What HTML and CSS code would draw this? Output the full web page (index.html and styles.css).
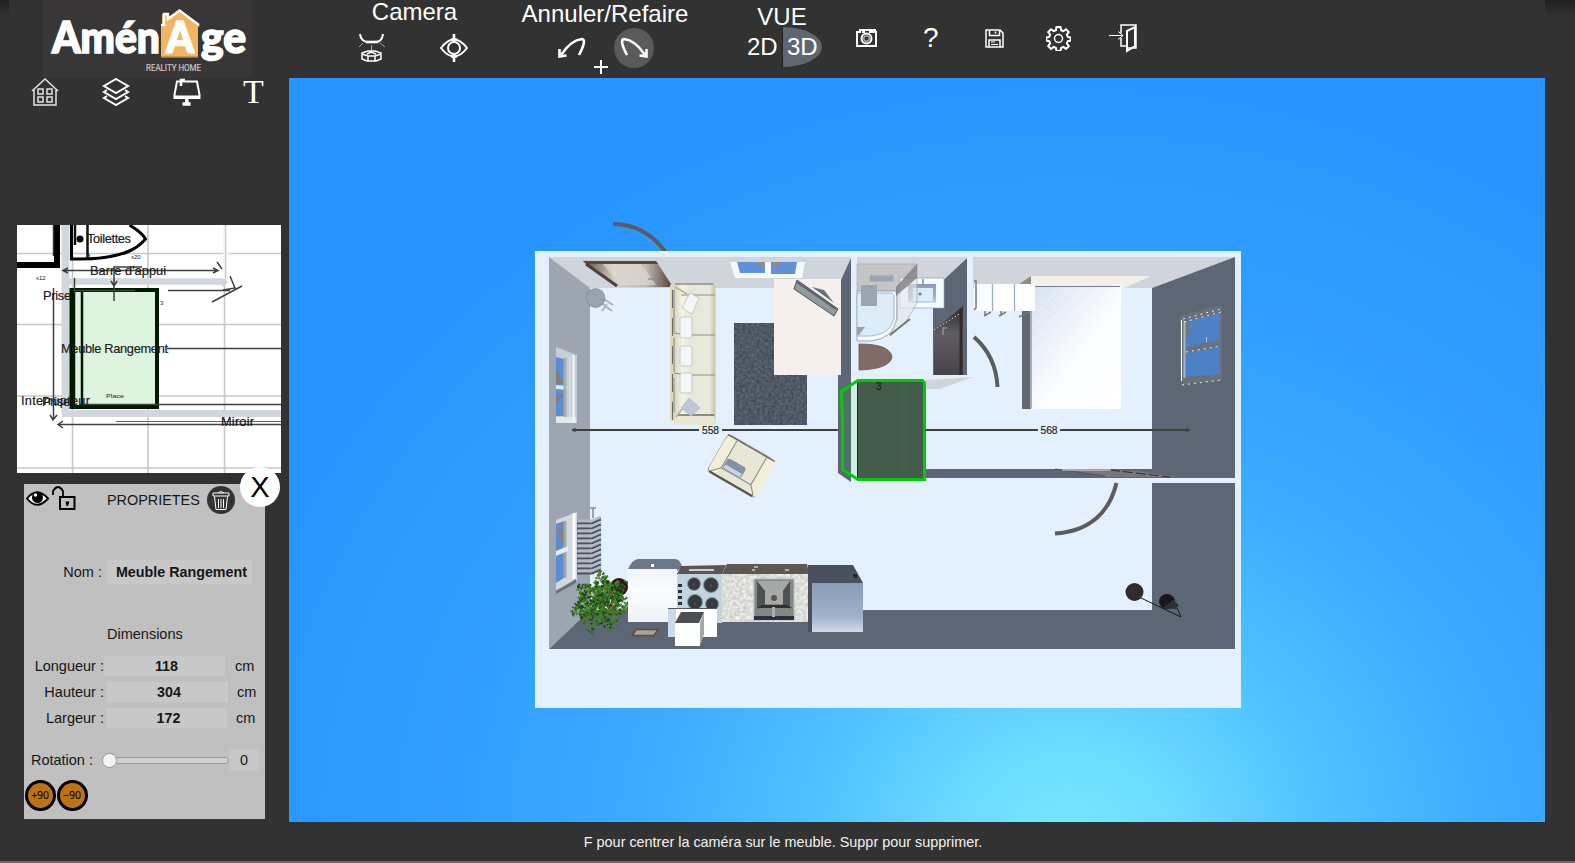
FILE: index.html
```html
<!DOCTYPE html>
<html lang="fr">
<head>
<meta charset="utf-8">
<title>AménAge</title>
<link rel="stylesheet" href="styles.css">
</head>
<body>
<div class="app">
  <header class="topbar">
    <div class="brand">
      <svg class="logo" viewBox="43 0 209 78" aria-label="AménAge Reality Home">
        <path d="M162 26V14h5v6l13-9 20 15-2 1v30h-37V27z" fill="#f2b562"/>
        <path d="M161 25h3V14h4v5l11.500-8.500L199 25" fill="none" stroke="#fff" stroke-width="2.400"/>
        <path d="M161 57h37" stroke="#b98a4a" stroke-width="1.500"/>
        <g class="logo-word">
          <text x="52" y="52.500" textLength="108" lengthAdjust="spacingAndGlyphs">Amén</text>
          <text x="166" y="52.500" textLength="28" lengthAdjust="spacingAndGlyphs">A</text>
          <text x="201" y="52.500" textLength="45" lengthAdjust="spacingAndGlyphs">ge</text>
        </g>
        <text class="logo-sub" x="146" y="70.500" textLength="55" lengthAdjust="spacingAndGlyphs">REALITY HOME</text>
      </svg>
    </div>
    <section class="group camera">
      <h2>Camera</h2>
      <div class="icons">
        <svg width="28" height="28" viewBox="0 0 28 28"><path d="M2 0q1 7 7 8h10q5-1 6-8" class="w2"/><path d="M8 8h12" class="w25"/><path d="M5 9l-4 4M22 9l5 4M13.500 11v5" class="w1 soft"/><path d="M4 19l6-2h7l6 2v6l-5 2h-9l-5-2zM4 20l6 2h7l6-2M10 22v5M17 22v5M9 20l4-2 5 2" class="w15"/></svg>
        <svg width="28" height="28" viewBox="0 0 28 28"><path d="M1 14q13-17 26 0-13 17-26 0z" class="w2"/><circle cx="14" cy="14" r="6" class="w2"/><path d="M14 0v8M14 20v8M11 5.500h6M11 22.500h6" class="w25"/></svg>
      </div>
    </section>
    <section class="group history">
      <h2>Annuler/Refaire</h2>
      <div class="icons">
        <svg width="28" height="22" viewBox="0 0 28 22"><path d="M3 18Q13 3 24 2q5 1-3 16M1.500 12v7.500l7-1" class="w25"/></svg>
        <span class="round"><svg width="28" height="22" viewBox="0 0 28 22"><path d="M25 18Q15 3 4 2q-5 1 3 16M26.500 12v7.500l-7-1" class="w25"/></svg></span>
        <svg class="plus" width="14" height="14" viewBox="0 0 14 14"><path d="M7 0v14M0 7h14" class="w2"/></svg>
      </div>
    </section>
    <section class="group view">
      <h2>VUE</h2>
      <div class="toggle"><span>2D</span><span class="active">3D</span></div>
    </section>
    <nav class="actions">
      <svg width="21" height="19" viewBox="0 0 21 19"><path d="M1 3h3V1h3v2h1V1h6v2h6v14H1zM16 3V1h3v2" class="w2"/><circle cx="10.500" cy="9.500" r="5" class="w2"/><circle cx="10.500" cy="9.500" r="3.500" fill="#aaa"/><circle cx="10.500" cy="9.500" r="2" fill="#323232"/></svg>
      <span class="help">?</span>
      <svg width="19" height="19" viewBox="0 0 19 19"><path d="M1 1h14l3 3v14H1zM4.500 1v5.500h10V1M4 18v-7h11v7M10.500 2.500v2" class="w15"/><path d="M6 13h4M6 15.500h7" class="w1"/></svg>
      <svg width="25" height="25" viewBox="0 0 25 25"><path d="M10.500 1h4l.6 3.200 2.200 1 2.700-2 2.800 2.800-2 2.700 1 2.200 3 .6v3l-3 .7-1 2.200 2 2.700-2.800 2.800-2.700-2-2.200 1-.6 3.100h-4l-.6-3.100-2.200-1-2.700 2-2.800-2.800 2-2.700-1-2.200-3-.7v-3l3-.6 1-2.200-2-2.700L5 3.200l2.700 2 2.200-1z" class="w2"/><circle cx="12.500" cy="12.500" r="4" class="w15"/></svg>
      <svg width="28" height="29" viewBox="0 0 28 29"><path d="M12 9V1h15v23h-8M12 14v8h6" class="w15"/><path d="M18 7l8-4v19l-8 5z" class="w2"/><path d="M0 11.500h14M9 7.500l5 4-5 4" class="w1"/></svg>
    </nav>
  </header>

  <aside class="sidebar">
    <nav class="catalog">
      <svg width="28" height="28" viewBox="0 0 28 28"><path d="M1 13L14 1l13 12M3 12v15h22V12M7 11h5v5H7zM16 11h5v5h-5zM7 19h5v5H7zM16 19h5v5h-5z" class="w15 light"/></svg>
      <svg width="28" height="28" viewBox="0 0 28 28"><path d="M14 1l12 7-12 7L2 8zM5 12l-3 2 12 7 12-7-3-2M5 18l-3 2 12 7 12-7-3-2" class="w2"/></svg>
      <svg width="28" height="28" viewBox="0 0 28 28"><path d="M4 3.500h20l2.500 13V20h-25v-3.500zM1 18.500h26" class="w2"/><path d="M8 8V2h4" class="w25"/><path d="M13.800 20v7M9.500 26h8" class="w4"/></svg>
      <span class="tool-text">T</span>
    </nav>

    <svg class="minimap" viewBox="17 225 264 248" preserveAspectRatio="none">
      <path d="M17 253.500H281M17 324.500H281M17 396H281M17 468H281M72.500 225V473M148 225V473M224.500 225V473" stroke="#c8c8c8" stroke-width="1.600"/>
      <path d="M226 225v55" stroke="#fff" stroke-width="5"/><path d="M225.500 225V282" stroke="#c8c8c8" stroke-width="1.500"/>
      <path d="M65.500 225V413" stroke="#d0d7de" stroke-width="8"/><path d="M62 413.500H281" stroke="#d0d7de" stroke-width="7"/>
      <path d="M69 281.500H222l4 3" fill="none" stroke="#d0d7de" stroke-width="6.500"/>
      <path d="M17 265H57V225" fill="none" stroke="#000" stroke-width="6"/><path d="M53.500 225v31" stroke="#333" stroke-width="1.500"/>
      <path d="M71.500 225v34q37 1 58-8 9-4 16-12-3-6-16-14" fill="none" stroke="#000" stroke-width="3"/><path d="M75 225v20M87.500 225v33" stroke="#111" stroke-width="2.500"/>
      <circle cx="80" cy="239" r="3.500"/>
      <rect x="71.500" y="290" width="85.500" height="117" fill="#dff4df" stroke="#001a00" stroke-width="4"/>
      <path d="M74 291V406M82 291V406" stroke="#001a00" stroke-width="2.500"/>
      <g class="measure">
        <path d="M63 270.500H217M68 268l-5 2.500 5 2.500M213 268l5 2.500-5 2.500M114 301v-34h28M111 281l3 5 3-5M74.500 278v16M75 290.500h60M168 290.500h62M212 302l30-16M223 290l12-2-5-12M217 262l5 7"/>
        <path d="M53.500 288V419M50 415l3 5 4-5M58 424.500H281M63 421l-5 3.500 5 3.500M167 348.500H281M79 404.500H281"/>
      </g>
      <path d="M116 421.500H281" stroke="#1769ff" stroke-width="1"/>
      <g class="map-text">
        <text x="87" y="243" textLength="44">Toilettes</text><text x="90" y="275" textLength="76">Barre d'appui</text>
        <text x="43" y="300" textLength="28">Prise</text><text x="61" y="353" textLength="107">Meuble Rangement</text>
        <text x="21" y="405" textLength="69">Interrupteur</text><text x="42" y="405.500" textLength="28">Prise</text><text x="221" y="426" textLength="33">Miroir</text>
      </g>
      <g class="map-small"><text x="106" y="398" textLength="18" lengthAdjust="spacingAndGlyphs">Place</text><text x="36" y="280">x12</text><text x="131" y="259">x20</text><text x="160" y="305">3</text><text x="87" y="258">8</text></g>
    </svg>

    <section class="panel">
      <button class="close" aria-label="Fermer">X</button>
      <div class="panel-head">
        <svg width="23" height="15" viewBox="0 0 23 15"><path d="M1 7.500Q11 -5 22 7.500 11 20 1 7.500z" fill="#fff" stroke="#000" stroke-width="2"/><circle cx="11.500" cy="6.500" r="5.500"/><circle cx="9.500" cy="4" r="1.700" fill="#fff"/></svg>
        <svg class="lock" width="24" height="24" viewBox="0 0 24 24"><path d="M1 9V5q5-8 10 0v6" fill="none" stroke="#000" stroke-width="1.800"/><rect x="8" y="11" width="14.500" height="12" fill="none" stroke="#000" stroke-width="2"/><path d="M13.500 15.500h4L16 20h-1.500z"/></svg>
        <h3>PROPRIETES</h3>
        <svg class="trash" width="28" height="28" viewBox="0 0 28 28"><circle cx="14" cy="14" r="14" fill="#333"/><path d="M6 7h16v3H6zM11 7q3-3 6 0M7.500 10.500l1.500 13h10l1.500-13M11.500 13v9M14 13v9M16.500 13v9" class="w1"/></svg>
      </div>
      <div class="field name"><label>Nom :</label><span class="input">Meuble Rangement</span></div>
      <h3 class="subtitle">Dimensions</h3>
      <div class="field length"><label>Longueur :</label><span class="input">118</span><span>cm</span></div>
      <div class="field height"><label>Hauteur :</label><span class="input">304</span><span>cm</span></div>
      <div class="field width"><label>Largeur :</label><span class="input">172</span><span>cm</span></div>
      <div class="field rotation"><label>Rotation :</label><span class="slider"><i class="knob"></i></span><span class="degrees">0</span></div>
      <div class="turns"><button>+90</button><button>−90</button></div>
    </section>
  </aside>

  <main class="viewport">
    <svg class="scene" viewBox="289 78 1256 744">
      <defs>
        <linearGradient id="cream"><stop stop-color="#d5d4c1"/><stop offset=".2" stop-color="#f6f5e3"/><stop offset=".4" stop-color="#e6e7d8"/><stop offset=".85" stop-color="#e9eada"/><stop offset="1" stop-color="#c5c3a9"/></linearGradient>
        <linearGradient id="steel" x2="0" y2="1"><stop stop-color="#8b9db5"/><stop offset=".7" stop-color="#a1b2cb"/><stop offset="1" stop-color="#d0dbea"/></linearGradient>
        <linearGradient id="cool" x2="1" y2="1"><stop stop-color="#d9e4f2"/><stop offset=".55" stop-color="#fbfdff"/><stop offset="1" stop-color="#fff"/></linearGradient>
        <linearGradient id="front" x2="0" y2="1"><stop stop-color="#eef4fb"/><stop offset=".4" stop-color="#f8fcff"/><stop offset="1" stop-color="#eff3f5"/></linearGradient>
        <linearGradient id="wood"><stop stop-color="#54473f"/><stop offset=".35" stop-color="#d4cdc6"/><stop offset=".7" stop-color="#c3bab0"/><stop offset="1" stop-color="#4a3c34"/></linearGradient>
        <linearGradient id="dark" y2="1" x2="0"><stop stop-color="#302a28"/><stop offset=".4" stop-color="#5f5d63"/><stop offset="1" stop-color="#464249"/></linearGradient>
        <pattern id="quilt" width="16" height="12" patternUnits="userSpaceOnUse" patternTransform="rotate(-8)"><path d="M0 6l8-6 8 6-8 6z" fill="none" stroke="#b8c5e0" stroke-opacity=".25"/></pattern>
        <linearGradient id="fade" x2=".6" y2="1"><stop stop-color="#fff"/><stop offset=".6" stop-color="#000"/></linearGradient>
        <mask id="quiltmask" maskContentUnits="objectBoundingBox"><rect width="1" height="1" fill="url(#fade)"/></mask>
        <filter id="wool" x="0" y="0" width="1" height="1" color-interpolation-filters="sRGB"><feTurbulence type="fractalNoise" baseFrequency=".35" numOctaves="2" seed="3"/><feColorMatrix values=".22 0 0 0 .2  .22 0 0 0 .235  .22 0 0 0 .285  0 0 0 0 1"/></filter>
        <filter id="stone" x="0" y="0" width="1" height="1" color-interpolation-filters="sRGB"><feTurbulence type="fractalNoise" baseFrequency=".3" numOctaves="2" seed="5"/><feColorMatrix values=".3 0 0 0 .72  .3 0 0 0 .72  .3 0 0 0 .705  0 0 0 0 1"/></filter>
      </defs>
      <path d="M613 224Q645 224 665.500 252" class="swing"/>
      <rect x="535" y="251" width="706" height="457" fill="#e4f0fd"/>
      <!-- walls -->
      <path d="M549 257H851L841 288H590zM857 257H967L946 279H857zM973 257H1235L1152 288H973z" fill="#cfd5db"/>
      <path d="M549 257L590 288V610L549 649z" fill="#9da5b0"/>
      <path d="M549 649L590 610H1152V483H1235V649zM1152 288L1235 257V478H925V469H1152zM851 258V482L838 473V375H841V280zM967 258V375H933V290z" fill="#5c6675"/>
      <path d="M925 380L973 377 940 389H925z" fill="#cfd5db"/>
      <!-- entrance door and rear window -->
      <path d="M583 261H656L673 287H617z" fill="url(#wood)"/><path d="M583 261h73l2 3h-72z" fill="#574940"/><path d="M603 264H641L656 285H620z" fill="#ddd8d1" opacity=".7"/><path d="M586 264l31 22" stroke="#4b3f38" stroke-width="3"/><path d="M648 279h8l1-4" class="metal"/>
      <path d="M730 262H805L802 278H735z" fill="#f6f9fc"/><path d="M737 262H765V273H740zM771 262H797L795 274H771z" fill="#5e91d8"/><path d="M755 262l10 0v7zM773 271l8-9h-8z" fill="#8e8d92"/>
      <!-- left windows -->
      <path d="M556 347L577 355V423H556z" fill="#c8ced7"/><path d="M556 357L564 359V416H556z" fill="#5b8ed4"/><path d="M556 369l9 15h-9zM564 393l-8 12v-8z" fill="#817e82"/><path d="M556 385l11 1v4l-11-1zM556 417h20v6h-20z" fill="#e5e9ee"/><path d="M565 358v59" stroke="#a7abb2" stroke-width="3"/><path d="M573.500 355v67" stroke="#f5f7fa" stroke-width="2"/><path d="M570 356v63" stroke="#e5e8ee"/>
      <path d="M556 520L577 512V580L556 590z" fill="#d2d8e0"/><path d="M556 524l8-3v57l-8 5z" fill="#5b8ed4"/><path d="M556 524l8-2v4zM556 530l9-2v20zM556 545l6 3h-6z" fill="#858184"/><path d="M565 521v57" stroke="#a5a4a7" stroke-width="3"/><path d="M556 551l12-5v5l-12 5z" fill="#e8ecf1"/><path d="M574 513v66" stroke="#fff" stroke-width="3"/><path d="M556 591l20-12v4l-20 11z" fill="#677180"/>
      <!-- stool -->
      <path d="M600 302l12 9M604 299l9 6M607 304l-5 7" stroke="#aeb3ba" stroke-width="2"/><circle cx="595.500" cy="298" r="9.500" fill="#98a3ae" stroke="#77828d" stroke-width=".6"/>
      <!-- sofa -->
      <rect x="670" y="284" width="6" height="137" rx="2" fill="#ded9bd"/><path d="M672.500 290v130" stroke="#6a6a66" stroke-dasharray="18 10"/>
      <rect x="674" y="283" width="41.500" height="142" rx="4" fill="url(#cream)"/><path d="M675 284h38" class="seam dark"/><path d="M681 295h34M686 335h29M674 333l12 2M686 375h29M674 373l12 2M677 415h38M674 290v43M674 338v34M674 378v34" class="seam"/><rect x="675" y="416" width="40" height="9" rx="4" fill="#e9e8d3"/><path d="M678 415h36" class="seam dark"/>
      <path d="M675 287l12 7M683 408l-7 9" stroke="#b5b39e" stroke-width="1.500"/>
      <g fill="#f4f6fa" stroke="#b4b9c2" stroke-width=".7"><path d="M690 293l9 5-7 16-10-6z"/><rect x="680" y="317" width="12" height="21" rx="2"/><rect x="680" y="346" width="12" height="20" rx="2"/><rect x="680" y="373" width="12" height="20" rx="2"/><path d="M689 398l11 10-9 8-10-8z" fill="#bdc7d8"/></g>
      <!-- rug, table, television -->
      <rect x="734" y="323" width="73" height="102" filter="url(#wool)"/>
      <rect x="774" y="279" width="67" height="96" fill="#f5f0ec"/>
      <path d="M812 287l12 3 10 13z" fill="#66707c"/><path d="M797 280l41 29-4 7-40-27z" fill="#929a9c" stroke="#4c545e"/><path d="M797 282l39 27" stroke="#596069" stroke-width="2"/>
      <!-- armchair -->
      <g transform="translate(743.500 465.500) rotate(30)"><rect x="-29" y="-20" width="55" height="43" rx="4" fill="#e8e6d4" stroke="#777467" stroke-width=".7"/><rect x="-29" y="-18" width="10" height="39" rx="4" fill="#f1efdc"/><rect x="17" y="-20" width="10" height="42" rx="4" fill="#f1efdc"/><path d="M-18-18v31H16v-31" class="seam"/><path d="M-18 13l-8 8M16 13l7 8" class="seam"/><path d="M-29 -19h54" class="seam dark"/><path d="M-27 22h50" stroke="#55534d" stroke-width="2"/><rect x="-17" y="1" width="21" height="12" rx="3" fill="#8490a8"/><path d="M-16 10h19" stroke="#c8d3e6" stroke-width="4"/></g>
      <!-- bathroom -->
      <path d="M857 264H917L899 291H857z" fill="#c6c5c6" stroke="#a4a5a9" stroke-width=".6"/><path d="M872 274v3M891 274v3M870 276h23v5h-23z" fill="#9aa5b1" stroke="#9aa5b1"/>
      <path d="M857 291H893q4 0 4 6V320q-3 18-26 21H857z" fill="#f4fafe" stroke="#8795a4" stroke-width=".8"/><path d="M857 293H891q3 0 3 5v20q-3 16-23 18H857z" fill="#dcecf8" stroke="#a9bac6"/>
      <path d="M857 327l8 0-6 8h-2z" fill="#9a9ea5"/><rect x="861" y="285" width="16" height="21" fill="#9aa5b1"/>
      <rect x="900" y="278" width="44" height="30" fill="#f5faff" stroke="#8fa6bd" stroke-width=".7"/><path d="M908 284h28v19h-28z" fill="url(#steel)"/><path d="M913 288h20v13h-20z" fill="#dcebfa"/><path d="M923 279v7" class="metal"/><circle cx="920" cy="294" r="1.500" fill="#687888"/>
      <path d="M897 287L917 264V302Q909 322 890 336L897 318z" fill="#e6e8ea" opacity=".6" stroke="#9b9a9c"/><path d="M896 287l21-23v14l-21 18z" fill="#77747a" opacity=".75"/><path d="M890 335l20-16" stroke="#777" stroke-width="2"/>
      <path d="M859 344q31 0 33 13-2 12-33 13z" fill="#806b69" stroke="#6a5654" stroke-width=".8"/>
      <path d="M934 330L963 306V375H934z" fill="url(#dark)"/><path d="M934 330l27-17" stroke="#d2d0d0" stroke-dasharray="1.500 2"/><path d="M961 309v66" stroke="#332b28" stroke-width="3"/><path d="M943 335v-7h4" class="metal" stroke-width="2"/>
      <path d="M974 337Q996 356 997.500 387" class="swing"/>
      <!-- bed and bedside units -->
      <path d="M1019 284L1031 276H1151L1120 290H1031z" fill="#f1f1e8"/><path d="M1019 284l12-8v9z" fill="#8c8c84"/>
      <rect x="1022" y="288" width="9" height="121" fill="#606870"/><rect x="1031" y="286" width="90" height="123" fill="url(#cool)"/><g mask="url(#quiltmask)"><rect x="1032" y="287" width="88" height="120" fill="url(#quilt)"/></g><path d="M1031 286.500h89" stroke="#777d91"/><path d="M1031 288v120" stroke="#a8aebd" stroke-width="2"/>
      <path d="M974 284H1035V311H974z" fill="#fbfdff"/><path d="M992.500 284v27M1014.500 284v27" stroke="#9cafc9" stroke-width="1.300"/><path d="M974 281l2 0v27l-2 2M984 316l7-4M999 316l7-4M1019 317l10-5M985 311v5M1001 311v5" fill="none" stroke="#737a85" stroke-width="1.500"/>
      <!-- right window -->
      <path d="M1180 316L1222 305V380L1181 385z" fill="#6b717c"/><path d="M1186 322L1220 313V340L1186 347zM1186 353L1220 347V374L1186 377z" fill="#4c81c6"/><path d="M1186 324h4l-1 10-3 5z" fill="#777575"/><path d="M1184.500 321v57" stroke="#abb4c0" stroke-width="2"/><path d="M1181.500 320v61" stroke="#fff"/><path d="M1183 319l38-10M1184 322l37-10M1186 352l35-6M1182 385l39-5" fill="none" stroke="#f0f3f5" stroke-dasharray="2 4"/><path d="M1206.500 337v5" stroke="#b7c2d0"/>
      <!-- lower partition door -->
      <path d="M1055 469L1138 471 1178 477H1108z" fill="#77777d"/><path d="M1055 469l50 7" stroke="#55504f"/><path d="M1110 470l60 7" stroke="#332e2e" stroke-dasharray="10 3"/><path d="M1062 470h49" stroke="#dce5df"/>
      <path d="M1055 533.500C1092 531 1110 510 1116.500 483" class="swing"/>
      <!-- kitchen -->
      <g class="radiator"></g>
      <path d="M593 508v10M590 508h6" class="metal"/>
      <ellipse cx="619" cy="587" rx="9" ry="9" fill="#321314"/><g class="plant"></g>
      <path d="M628 569q4-9 10-10h38q5 2 6 8l-5 4z" fill="#6e7786"/><rect x="628" y="569" width="49" height="53" fill="url(#front)"/><rect x="651" y="564" width="3" height="3" fill="#fff"/>
      <path d="M681 566L726 565 722 574H677z" fill="#5c5652"/><path d="M689 570h25" stroke="#f6f6f6" stroke-width="1.500"/><rect x="677" y="574" width="45" height="49" fill="#c4d3dc"/>
      <g fill="#303d40" stroke="#8799a3"><circle cx="694" cy="584" r="6.500"/><circle cx="711" cy="585" r="7.500"/><circle cx="695" cy="602" r="7.500"/><circle cx="712" cy="604" r="6.500"/></g><path d="M694 583v3M711 584v3M695 602v3M712 603v3" stroke="#a9262d" stroke-width="1.500"/><path d="M680 584v24" stroke="#26343a" stroke-width="4" stroke-dasharray="3 3"/>
      <path d="M727 564H807L809 574H722z" fill="#5d5853"/><path d="M754 567h4M752 570h3M785 570h4" stroke="#fff"/><rect x="722" y="574" width="87" height="48" filter="url(#stone)"/>
      <rect x="754" y="579" width="40" height="41" fill="#838786" stroke="#b8bcba"/><path d="M757 581h33l-7 10h-18z" fill="#a4aaa9"/><path d="M757 581l8 10v14l-8 4zM790 581l-7 10v14l7 4z" fill="#4c5153"/><rect x="765" y="591" width="18" height="13" fill="#a9aaa6"/><circle cx="774" cy="598" r="3" fill="#525655"/><path d="M754 616h40v4h-40zM757 608l5-3h25l5 3z" fill="#2e3033"/><path d="M773.500 607v10" stroke="#adb0af" stroke-width="3"/>
      <path d="M808 565H853L863 583H812V632H808z" fill="#4b505d"/><rect x="812" y="583" width="51" height="49" fill="url(#steel)"/><path d="M853 574h4v4h-3z" fill="#1f232a"/>
      <rect x="668" y="608" width="49" height="29" fill="#fff"/><rect x="668" y="608" width="8" height="29" fill="#cbdae9"/><path d="M668 608.500h49" stroke="#54575b"/><path d="M681 612H704L699 623H675z" fill="#4c4e53"/><path d="M704 612v22l-4 12V623z" fill="#a2a7aa"/><rect x="675" y="623" width="25" height="23" fill="#fbfffe"/>
      <path d="M636 629.500H658L654 635.500H632.500z" fill="#a4a4a5" stroke="#70452f" stroke-width="1.500"/>
      <!-- floor lamps -->
      <path d="M1141 598L1181 617 1177 608" fill="none" stroke="#161618"/><circle cx="1134.500" cy="592" r="9" fill="#2d2d30"/><ellipse cx="1167" cy="601.500" rx="8" ry="7.500" fill="#17181a"/><path d="M1163 608l13 1 3-4-6-5z" fill="#303134"/>
      <!-- selected cabinet -->
      <path d="M841 391L858 381V478L842 469z" fill="#527068"/><path d="M851 385l7-4v97l-7-4z" fill="#cdf0e2"/><rect x="858" y="381" width="66" height="98" fill="#445c4b"/><path d="M869 382v96M883 382v96M897 382v96M911 382v96" stroke="#3e5645" opacity=".6"/><path d="M857.500 382v96" stroke="#17251c"/>
      <path d="M858 380.500H922.500L924.500 383V479.500H858L842.500 469.500V426L841.500 391z" fill="none" stroke="#00cb05" stroke-width="3"/>
      <g class="measure thick"><path d="M572 430H699M722 430H838M925 430H1038M1060 430H1188"/></g><path d="M571.500 430l4-2.500v5zM1190.500 430l-4-2.500v5z" fill="#404040"/>
      <g class="dim"><text x="710.500" y="434">558</text><text x="1049" y="434">568</text><text x="878.500" y="389.500">3</text></g>
    </svg>
  </main>
  <footer class="status">F pour centrer la caméra sur le meuble. Suppr pour supprimer.</footer>
</div>
<script src="scene.js"></script>
</body>
</html>
```

FILE: styles.css
```css
* { box-sizing: border-box; }
body { margin: 0; background: #323232; font-family: "Liberation Sans", Arial, sans-serif; }
h2, h3 { margin: 0; font-weight: 400; }
button { border: 0; padding: 0; font: inherit; }
svg { display: block; flex: none; }
.w1, .w15, .w2, .w25, .w4 { fill: none; stroke: #fff; stroke-width: 1; }
.w15 { stroke-width: 1.5; }
.w2 { stroke-width: 2; }
.w25 { stroke-width: 2.6; }
.w4 { stroke-width: 3.4; }
.soft { stroke: #aaa; }
.light { stroke: #e4e4e4; }

.app {
  display: grid;
  grid-template: 78px 744px 41px / 289px 1256px 30px;
  width: 1575px; height: 863px;
  overflow: hidden;
  background:
    linear-gradient(#202020, #323232) 0 0 / 9px 16px no-repeat,
    linear-gradient(#202020, #323232) 100% 0 / 30px 16px no-repeat,
    #323232;
}
.topbar { grid-column: 1 / -1; display: flex; align-items: flex-start; color: #fff; }
.brand { width: 289px; padding-left: 43px; }
.logo { width: 209px; height: 78px; background: #393637; }
.logo-word { font: 900 43px Lato, sans-serif; fill: #fff; stroke: #fff; stroke-width: 1.6px; }
.logo-sub { font: 8.5px Roboto, sans-serif; fill: #c5c5c5; stroke: #c5c5c5; stroke-width: .2px; }
.group h2 { font-size: 24px; line-height: 28px; text-align: center; white-space: nowrap; }
.icons { display: flex; position: relative; }
.camera { width: 110px; margin-left: 69px; }
.camera h2 { line-height: 24px; padding-left: 3px; }
.camera .icons { justify-content: space-between; margin-top: 10px; }
.history { width: 168px; margin-left: 53px; }
.history .icons { padding-left: 37px; align-items: center; gap: 28px; }
.round { display: grid; place-items: center; width: 40px; height: 40px; border-radius: 50%; background: #5a5a5a; }
.plus { position: absolute; left: 73px; top: 32px; }
.view { width: 78px; margin-left: 57px; padding-top: 3px; }
.view h2 { text-indent: -6px; line-height: 28px; }
.toggle { display: flex; height: 40px; font-size: 24px; line-height: 39px; margin-top: -4px; }
.toggle span { width: 36px; padding-left: 1px; }
.toggle .active { width: 40px; padding-left: 4px; border-left: 1px solid #222; border-radius: 0 40px 40px 0 / 0 20px 20px 0; background: #5f6672; }
.actions { display: flex; align-items: center; height: 76px; margin-left: 32px; }
.help { font-size: 28px; width: 16px; margin-left: 46px; }
.actions .help + svg { margin-left: 46px; }
.actions .help + svg + svg { margin-left: 42px; }
.actions .help + svg + svg + svg { margin-left: 38px; }

.sidebar { display: flex; flex-direction: column; }
.catalog { display: flex; align-items: flex-start; gap: 43px; height: 146px; padding-left: 31px; color: #fff; }
.tool-text { font: 34px/28px "Liberation Serif", serif; margin-left: -1px; }
.minimap { width: 264px; height: 248px; margin: 1px 0 11px 17px; background: #fff; }
.measure { fill: none; stroke: #404040; stroke-width: 1.5; }
.measure.thick { stroke-width: 1.8; }
.map-text { font: 12.8px "Liberation Sans", sans-serif; fill: #1c1c1c; stroke: #1c1c1c; stroke-width: .2px; }
.map-small { font: 6px "Liberation Sans", sans-serif; fill: #222; }

.panel { position: relative; width: 241px; height: 335px; margin-left: 24px; background: #c0c0c0; color: #161616; font-size: 14.5px; box-shadow: 0 0 3px #2c3638; }
.close { position: absolute; left: 216px; top: -17px; width: 40px; height: 40px; border-radius: 50%; background: #fff; color: #000; font-size: 29px; line-height: 41px; }
.panel-head { display: flex; align-items: flex-start; height: 76px; padding: 2px 0 0 2px; }
.panel-head > svg:first-child { margin-top: 5px; }
.lock { margin-left: 3px; }
.panel-head h3 { width: 100px; margin-left: 31px; font-size: 14.4px; line-height: 24px; margin-top: 2px; }
.trash { margin-left: 0; }
.field { display: flex; align-items: center; height: 20px; white-space: nowrap; }
.field label { text-align: right; flex: none; }
.input { flex: none; height: 20px; background: #c8c8c8; font-weight: 700; font-size: 14.3px; line-height: 21px; text-align: center; }
.name, .name .input { height: 24px; line-height: 25px; }
.name label { width: 78px; margin-right: 5px; line-height: 20px; }
.name .input { width: 145px; padding-left: 4px; }
.subtitle { margin: 40px 0 12px 83px; font-size: 14.5px; line-height: 20px; height: 20px; }
.length label, .height label, .width label { width: 80px; }
.length .input { width: 121px; margin-right: 10px; padding-left: 4px; }
.height { margin-top: 6px; }
.height .input { width: 122px; margin: 0 9px 0 2px; padding-left: 4px; }
.width { margin-top: 6px; }
.width .input { width: 121px; margin: 0 9px 0 2px; padding-left: 4px; }
.rotation { margin-top: 22px; }
.rotation label { width: 69px; margin-right: 9px; }
.slider { position: relative; width: 127px; height: 7px; border: 1px solid #999; border-radius: 4px; background: #cfcfcf; }
.knob { position: absolute; left: -1px; top: -5px; width: 15px; height: 15px; border-radius: 50%; border: 1px solid #999; background: #f5f5f5; }
.degrees { width: 30px; height: 20px; line-height: 20px; text-align: center; background: #c7c7c7; }
.turns { display: flex; gap: 1px; padding: 10px 0 0 1px; }
.turns button { width: 31px; height: 31px; border: 3px solid #000; border-radius: 50%; background: #bd7214; font: 10.5px/25px "Noto Sans", sans-serif; letter-spacing: -.2px; text-indent: -1px; color: #000; }

.viewport { background: radial-gradient(ellipse 900px 800px at 780px 765px, #78e8ff 0, #6adaff 13%, #50c2ff 28%, #3caaff 48%, #309eff 70%, #2794ff 100%); }
.scene { width: 1256px; height: 744px; }
.swing { fill: none; stroke: #5c5c5c; stroke-width: 4; }
.seam { fill: none; stroke: #8f8d7b; stroke-width: 1.1; }
.seam.dark { stroke: #5f5e55; }
.metal { fill: none; stroke: #87909b; stroke-width: 1.6; }
.dim { font: 10.3px "Liberation Sans", sans-serif; fill: #1a1a1a; stroke: #1a1a1a; stroke-width: .15px; text-anchor: middle; }
.status { grid-column: 1 / -1; border-bottom: 2px solid #6c6c6c; padding-right: 9px; color: #f2f2f2; font-size: 14.4px; line-height: 40px; text-align: center; }
```

FILE: scene.js
```js
const NS = 'http://www.w3.org/2000/svg';
let seed = 17;
const rand = () => (seed = (seed * 16807) % 2147483647) / 2147483647;
const addPath = (parent, d, stroke, width) => {
  const p = document.createElementNS(NS, 'path');
  p.setAttribute('d', d);
  p.setAttribute('fill', 'none');
  p.setAttribute('stroke', stroke);
  p.setAttribute('stroke-width', width);
  parent.appendChild(p);
};

// Radiator fins
const radiator = document.querySelector('.radiator');
for (let i = 0; i < 11; i++) {
  const y = 520 + i * 5;
  addPath(radiator, `M578 ${y + 1}h14l9-4`, '#b4bbc6', 3);
  addPath(radiator, `M577 ${y + 3.5}h15l9-4`, '#4c535f', 2.2);
}

// Foliage
const plant = document.querySelector('.plant');
const greens = ['#254d18', '#397526', '#4c8f32', '#356421', '#1c3b18', '#477f30'];
for (let i = 0; i < 900; i++) {
  const a = rand() * 6.283, r = Math.pow(rand(), 0.7) * (0.85 + 0.15 * Math.sin(a * 7));
  const x = 601.5 + Math.cos(a) * r * 31, y = 602.5 + Math.sin(a) * r * 31 - (x - 601) * 0.1;
  const dx = rand() * 6 - 3, dy = rand() * 6 - 3;
  addPath(plant, `M${x.toFixed(1)} ${y.toFixed(1)}l${dx.toFixed(1)} ${dy.toFixed(1)}`, i % 42 ? greens[i % 6] : '#b4582e', 2);
}
```
